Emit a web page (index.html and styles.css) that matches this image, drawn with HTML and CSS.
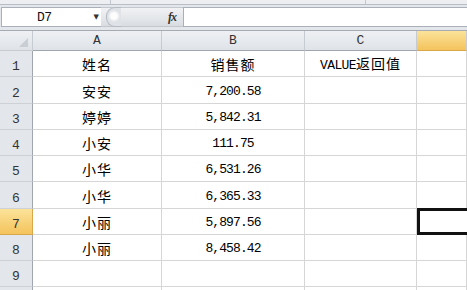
FILE: index.html
```html
<!DOCTYPE html>
<html>
<head>
  <meta charset="utf-8">
  <title>销售额 - 工作表</title>
  <link rel="stylesheet" href="styles.css">
</head>
<body>

<div class="ribbon-edge">
  <span class="edge-gap"></span>
  <span class="edge-gap wide"></span>
</div>

<div class="formula-row">
  <div class="name-box">
    <span class="cell-ref">D7</span>
    <span class="drop">&#9660;</span>
  </div>
  <div class="fx-area">
    <span class="grip"></span>
    <span class="fx">fx</span>
  </div>
  <div class="formula-input"></div>
</div>

<div class="sheet">
  <div class="hdr corner"><span class="corner-mark"></span></div>
  <div class="hdr col">A</div>
  <div class="hdr col">B</div>
  <div class="hdr col">C</div>
  <div class="hdr col active"></div>

  <div class="hdr row">1</div>
  <div class="cell cn">姓名</div>
  <div class="cell cn">销售额</div>
  <div class="cell">VALUE<span class="cn">返回值</span></div>
  <div class="cell"></div>

  <div class="hdr row">2</div>
  <div class="cell cn">安安</div>
  <div class="cell num">7,200.58</div>
  <div class="cell"></div>
  <div class="cell"></div>

  <div class="hdr row">3</div>
  <div class="cell cn">婷婷</div>
  <div class="cell num">5,842.31</div>
  <div class="cell"></div>
  <div class="cell"></div>

  <div class="hdr row">4</div>
  <div class="cell cn">小安</div>
  <div class="cell num">111.75</div>
  <div class="cell"></div>
  <div class="cell"></div>

  <div class="hdr row">5</div>
  <div class="cell cn">小华</div>
  <div class="cell num">6,531.26</div>
  <div class="cell"></div>
  <div class="cell"></div>

  <div class="hdr row">6</div>
  <div class="cell cn">小华</div>
  <div class="cell num">6,365.33</div>
  <div class="cell"></div>
  <div class="cell"></div>

  <div class="hdr row active">7</div>
  <div class="cell cn">小丽</div>
  <div class="cell num">5,897.56</div>
  <div class="cell"></div>
  <div class="cell selected"></div>

  <div class="hdr row">8</div>
  <div class="cell cn">小丽</div>
  <div class="cell num">8,458.42</div>
  <div class="cell"></div>
  <div class="cell"></div>

  <div class="hdr row">9</div>
  <div class="cell"></div>
  <div class="cell"></div>
  <div class="cell"></div>
  <div class="cell"></div>

  <!-- row 10 is only peeking in at the bottom -->
  <div class="hdr row"></div>
  <div class="cell"></div>
  <div class="cell"></div>
  <div class="cell"></div>
  <div class="cell"></div>
</div>

</body>
</html>
```

FILE: styles.css
```css
body {
  margin: 0;
  background: #e3e7ec;
  font-family: "Liberation Mono", "Noto Sans CJK SC", monospace;
  overflow: hidden;
}

/* strip left over from the ribbon */
.ribbon-edge {
  height: 4px;
  background: #eceef1;
  border-bottom: 1px solid #b9bec6;
  position: relative;
}

.edge-gap {
  position: absolute;
  top: 0;
  left: 110px;
  width: 1px;
  height: 4px;
  background: #c3c8cf;
}

.edge-gap.wide {
  left: 365px;
}

.formula-row {
  display: flex;
  height: 20px;
  padding: 2px 0 2px 0;
  margin-bottom: 1px;
}

.name-box {
  width: 100px;
  margin-left: 1px;
  background: #fff;
  border: 1px solid #a9b0b9;
  border-right: none;
  display: flex;
  align-items: center;
  box-sizing: border-box;
}

.cell-ref {
  margin-left: 35px;
  font-size: 13px;
  letter-spacing: -0.5px;
  color: #111;
}

.drop {
  margin-left: auto;
  margin-right: 2px;
  font-size: 7px;
  color: #333;
  font-family: "DejaVu Sans", sans-serif;
}

.fx-area {
  width: 82px;
  display: flex;
  align-items: center;
  background: linear-gradient(#f1f2f4, #d9dde2);
  border-top: 1px solid #c2c7ce;
  border-bottom: 1px solid #c2c7ce;
  box-sizing: border-box;
}

.grip {
  width: 14px;
  height: 18px;
  margin-left: 5px;
  border-radius: 9px 0 0 9px;
  border: 1px solid #b5bbc3;
  border-right: none;
  background: radial-gradient(circle at 7px 8px, #fdfdfd 3px, #dfe2e6 6px);
}

.fx {
  margin-left: auto;
  margin-right: 7px;
  font-family: "Liberation Serif", serif;
  font-style: italic;
  font-weight: bold;
  font-size: 12px;
  letter-spacing: -1px;
  color: #333;
}

.formula-input {
  flex: 1;
  background: #fff;
  border: 1px solid #a9b0b9;
  border-right: none;
}

.sheet {
  display: grid;
  grid-template-columns: 33px 129px 143px 112px 1fr;
  grid-template-rows: 20px repeat(10, 26.25px);
  background: #fff;
  border-top: 1px solid #a5abb3;
}

.hdr {
  background: linear-gradient(#eef0f3, #dfe3e8);
  border-right: 1px solid #c6cbd2;
  border-bottom: 1px solid #c6cbd2;
  color: #333;
  font-size: 13px;
  display: flex;
  justify-content: center;
  box-sizing: border-box;
}

.hdr.col {
  align-items: center;
  border-bottom-color: #9fa6af;
}

.hdr.row {
  align-items: flex-end;
  padding-bottom: 2px;
  border-right-color: #9fa6af;
  background: #e3e6ea;
  border-bottom-color: #cdd1d6;
}

.hdr.active {
  background: linear-gradient(#fbe39a, #f4c35c);
  border-bottom-color: #d8a74a;
}

.hdr.row.active {
  border-right-color: #d8a74a;
}

.corner {
  position: relative;
}

.corner-mark {
  position: absolute;
  right: 4px;
  bottom: 3px;
  width: 0;
  height: 0;
  border-left: 9px solid transparent;
  border-bottom: 9px solid #c9ced5;
}

.cell {
  border-right: 1px solid #d6d6d6;
  border-bottom: 1px solid #d6d6d6;
  display: flex;
  justify-content: center;
  align-items: flex-end;
  padding-bottom: 3px;
  font-size: 13px;
  letter-spacing: -0.6px;
  color: #000;
  box-sizing: border-box;
  position: relative;
}

.cn {
  font-family: "Noto Sans CJK SC", sans-serif;
  font-size: 14px;
  letter-spacing: 1px;
  line-height: 20px;
}

.cell.cn {
  padding-bottom: 2px;
}

.num {
  padding-bottom: 4px;
  letter-spacing: -0.9px;
}

.cell.selected {
  border: 3px solid #111;
  border-right: none;
  margin-top: -1px;
  height: calc(100% + 1px);
}
```
